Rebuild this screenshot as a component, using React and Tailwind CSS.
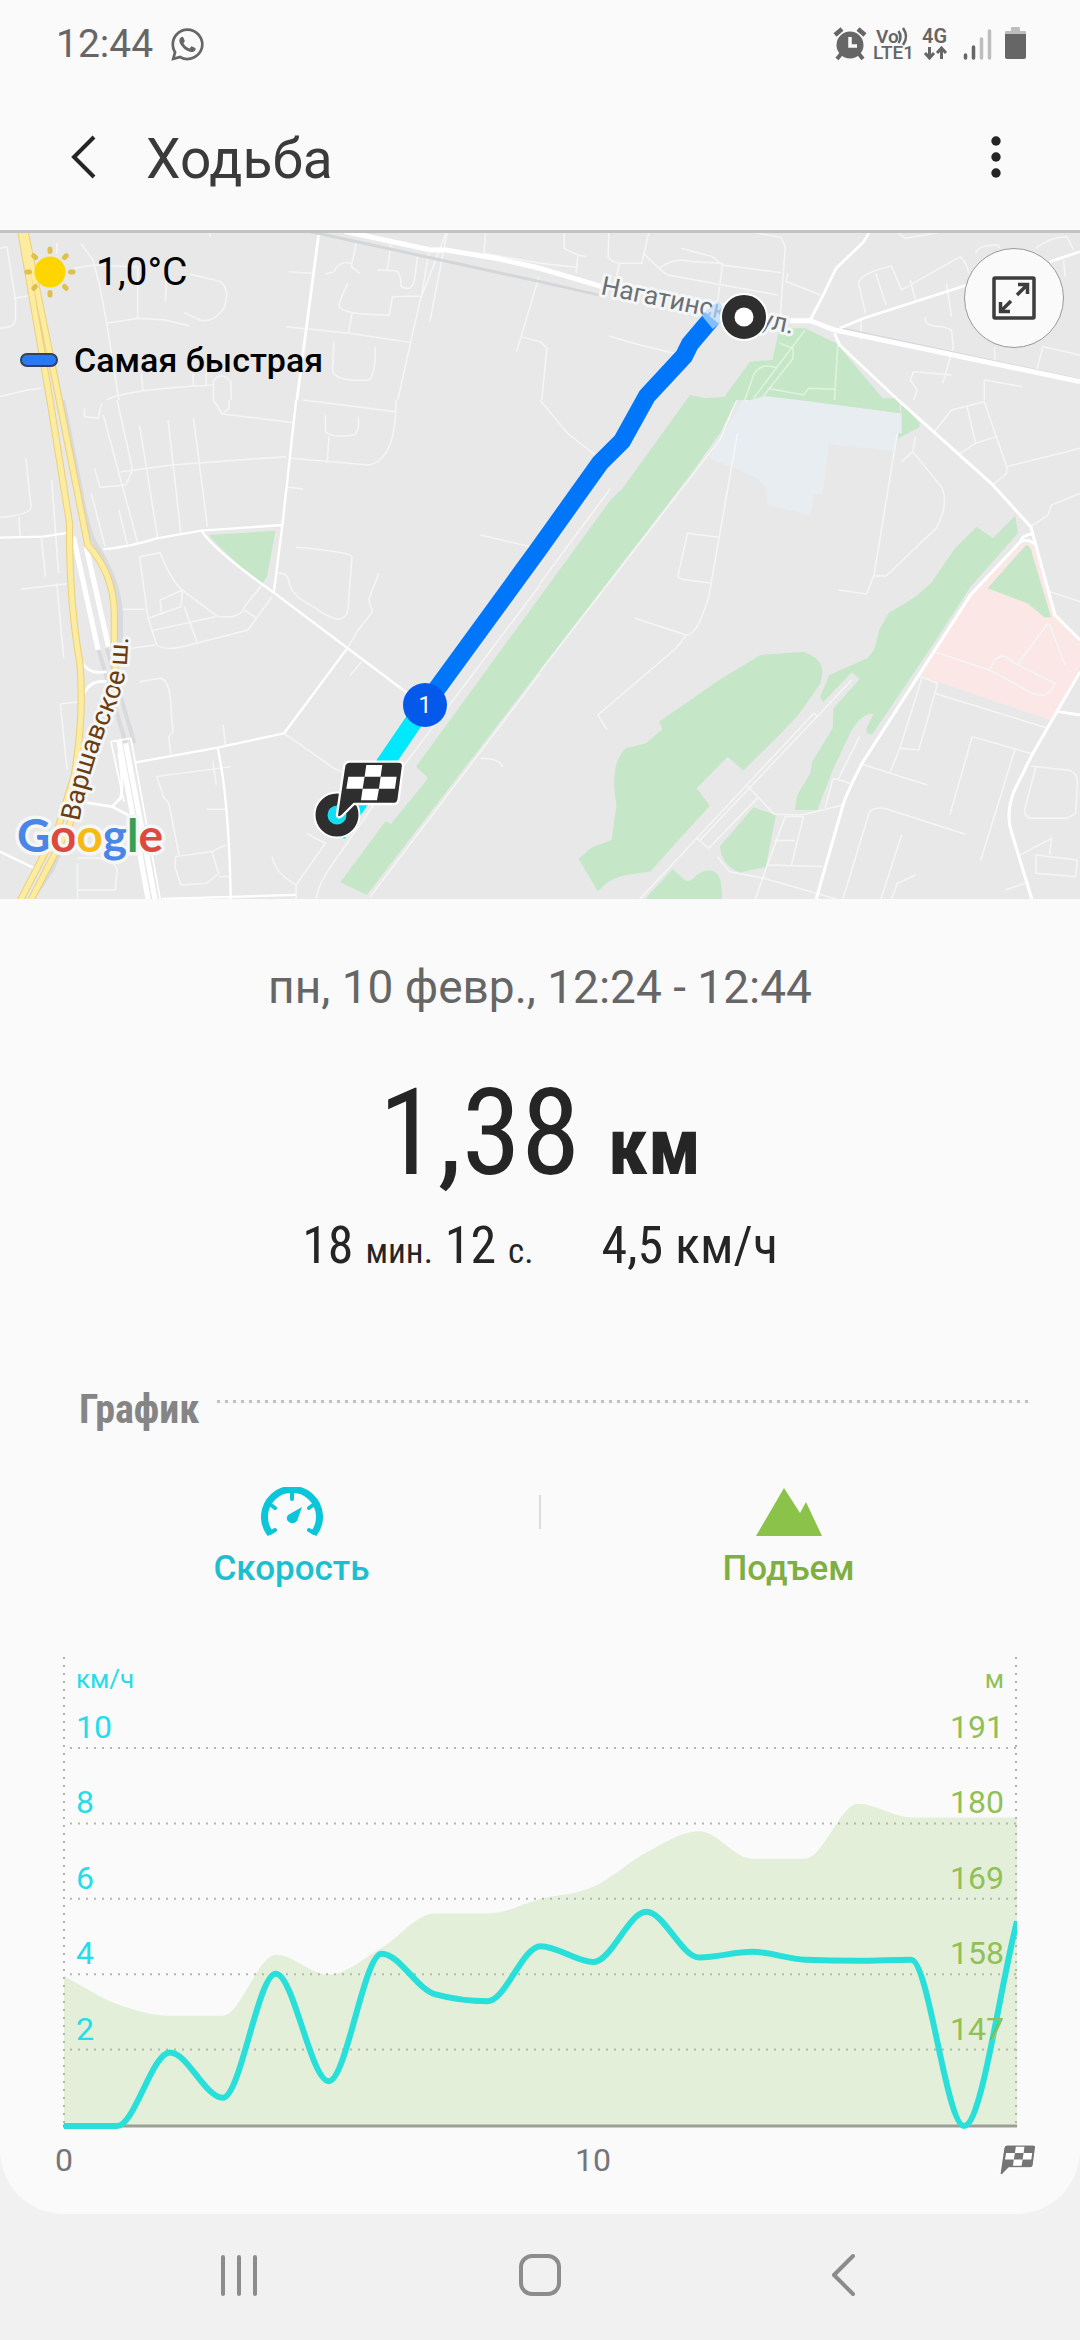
import { FaWhatsapp } from 'react-icons/fa'

const speed = [0, 0, 1.95, 0.75, 4.04, 1.19, 4.57, 3.5, 3.31, 4.77, 4.35, 5.68, 4.47, 4.62, 4.41, 4.38, 4.41, 0, 5.43]
const elevation = [157.9, 153.8, 152.1, 152.1, 161, 158.1, 162, 167, 167, 169.1, 170.9, 175.9, 179, 175, 175, 183, 181, 181, 181]

const CHART = { left: 64, right: 1017, top: 17, bottom: 486, step: 75.4 }

const rows = [
  { speed: 10, elevation: 191 },
  { speed: 8, elevation: 180 },
  { speed: 6, elevation: 169 },
  { speed: 4, elevation: 158 },
  { speed: 2, elevation: 147 }
]

// Monotone cubic curve through the points, so the line never overshoots a value
function smoothPath(values, toY) {
  const dx = (CHART.right - CHART.left) / (values.length - 1)
  const ys = values.map(toY)
  const slopes = ys.slice(1).map((y, i) => (y - ys[i]) / dx)
  const tangents = ys.map((_, i) => {
    if (i === 0) return slopes[0]
    if (i === ys.length - 1) return slopes[i - 1]
    const a = slopes[i - 1]
    const b = slopes[i]
    if (a * b <= 0) return 0
    return Math.sign(a) * Math.min(Math.abs(a), Math.abs(b), Math.abs(a + b) / 4) * 2
  })
  let d = `M${CHART.left} ${ys[0]}`
  for (let i = 1; i < ys.length; i++) {
    const x0 = CHART.left + dx * (i - 1)
    const x1 = x0 + dx
    d += `C${x0 + dx / 3} ${ys[i - 1] + (tangents[i - 1] * dx) / 3} ${x1 - dx / 3} ${ys[i] - (tangents[i] * dx) / 3} ${x1} ${ys[i]}`
  }
  return d
}

const speedPath = smoothPath(speed, v => CHART.bottom - (v / 2) * CHART.step)
const elevationPath = smoothPath(elevation, v => CHART.bottom - ((v - 136) / 11) * CHART.step)

function FlagShape({ fill }) {
  return (
    <>
      <path
        d="M50 5H195Q211 5 209 20L196 118Q194 132 180 132H62L26 168Q11 178 11 164L32 22Q34 5 50 5Z"
        fill={fill}
        stroke="#fff"
        strokeWidth="7"
        strokeLinejoin="round"
      />
      <path d="M99 15h48l-5 35h48l-5 36h-48l-6 35h-48l5-35h-49l6-36h49ZM94 50l-6 36h49l5-36Z" fill="#fff" fillRule="evenodd" />
    </>
  )
}

function StatusBar() {
  return (
    <div className="flex h-[88px] items-center justify-between pl-14 pr-[53px] text-[#666]">
      <div className="flex items-center gap-4">
        <span className="text-[39px] leading-[44px]">12:44</span>
        <FaWhatsapp className="size-[37px]" />
      </div>
      <svg className="h-9 w-[194px] overflow-visible" viewBox="0 0 194 36" fill="#666">
        {/* alarm */}
        <circle cx="17" cy="19" r="13.5" />
        <path d="M2 9l7-6M32 9l-7-6" stroke="#666" strokeWidth="4.5" />
        <path d="M8 28l-4 5M26 28l4 5" stroke="#666" strokeWidth="4" />
        <path d="M17 11v9h7" fill="none" stroke="#fafafa" strokeWidth="3.5" />
        {/* network */}
        <text x="43" y="17" fontSize="19" fontWeight="600">Vo</text>
        <path d="M65.500 5q4 6 0 12M70 2q6 8.500 0 17" fill="none" stroke="#666" strokeWidth="2.500" />
        <text x="40" y="33" fontSize="19" fontWeight="500">LTE1</text>
        <text x="89" y="17" fontSize="20" fontWeight="600">4G</text>
        <path d="M96.500 21v11m-4.500-5l4.500 5 4.500-5M108.500 33v-11m-4.500 5l4.500-5 4.500 5" fill="none" stroke="#666" strokeWidth="3" />
        {/* signal */}
        <path d="M132.500 32v-3M140.500 32v-11" stroke="#666" strokeWidth="3.500" strokeLinecap="round" />
        <path d="M148.500 32v-19M156.500 32v-27" stroke="#bdbdbd" strokeWidth="3.500" strokeLinecap="round" />
        {/* battery */}
        <path d="M172 8V6q0-1 1-1h5V2q0-1 1-1h7q1 0 1 1v3h5q1 0 1 1v2Z" fill="#bdbdbd" />
        <path d="M172 8h21v23q0 2-2 2h-17q-2 0-2-2Z" />
      </svg>
    </div>
  )
}

function Header() {
  return (
    <header className="flex h-[142px] items-center pb-1 pl-[62px] pr-[62px]">
      <button type="button" aria-label="Назад" className="flex size-11 items-center justify-center">
        <svg className="size-11" viewBox="0 0 44 44" fill="none" stroke="#252525" strokeWidth="4">
          <path d="M32 2L12 22l20 20" />
        </svg>
      </button>
      <h1 className="ml-10 grow pt-1 text-[55px] leading-[64px] text-[#3a3a3a]">Ходьба</h1>
      <button type="button" aria-label="Меню" className="flex size-11 items-center justify-center">
        <svg className="size-11" viewBox="0 0 44 44" fill="#252525">
          <circle cx="22" cy="6" r="4.700" />
          <circle cx="22" cy="22" r="4.700" />
          <circle cx="22" cy="38" r="4.700" />
        </svg>
      </button>
    </header>
  )
}

function MapDrawing() {
  return (
    <svg className="block h-auto w-full" viewBox="0 0 1080 669">
      <defs>
        <path id="warsaw" d="M79 592C87 552 97 520 111 487S128 440 128 404V380" />
      </defs>
      <rect width="1080" height="669" fill="#e8e8e8" />

      {/* parks and blocks, south east */}
      <g transform="matrix(.3444 0 0 .3333 540 170)">
        <path d="M490 175L590 0H770L1050 40 1025 152 838 132 820 280 795 285 785 345 660 315 658 265 635 238 590 215Z" fill="#e8edf1" />
        <path d="M610-5H1045V40L770 0 640 12Z" fill="#c5e7c8" />
        <path d="M1050 10L1105 72 1040 116Z" fill="#c5e7c8" />
        <path d="M425 0L240 265 205 300 0 590V810L440 220 525 95 570 0 500 10Z" fill="#c5e7c8" />
        <path d="M1268 380L1315 415 1380 347 1388 400 1250 560 1150 720 965 1003Q945 1005 948 985L968 943Q940 935 905 990L850 1110 805 1230H740L747 1185 785 1120 790 1085 850 985 852 925 928 838 905 817 822 907 813 890 840 825 950 775 970 750 985 690 1012 640 1090 590 1135 550 1205 445Z" fill="#c5e7c8" />
        <path d="M640 765L765 755Q822 775 820 820L815 850 750 945 690 1010 590 1112 545 1070 455 1165 493 1217 320 1415 250 1425Q200 1435 168 1474L112 1377 150 1343 208 1320 222 1215Q200 1090 250 1045L308 1030 355 988 346 965 520 840Z" fill="#c5e7c8" />
        <path d="M620 1222L685 1245 655 1402 580 1418Q525 1395 523 1338Z" fill="#c5e7c8" />
        <path d="M303 1500L385 1407 420 1440Q435 1450 455 1425 490 1400 515 1422 530 1440 528 1500Z" fill="#c5e7c8" />
        <path d="M1400 430L1435 430 1500 640 1568 720V800L1485 962 1105 828 1250 590Z" fill="#fbe7e6" />
        <path d="M1412 434Q1428 440 1430 465L1484 652H1465L1415 610 1300 565Z" fill="#c5e7c8" />
        <g fill="none" stroke="#f4f6f6" strokeWidth="4.500">
          <path d="M0 815L525 115 570 0M600 0L575 90 490 590Q455 710 425 705L275 655M520 412L428 400 400 530 412 538 498 550M425 705L395 745 168 945 195 990M1045 50L970 525 948 582 865 570M970 528H1005L1150 385Q1190 310 1165 260L1082 155 1090 110M1082 155L1050 185M0 550L205 265M0 0L80 100 160 165" />
          <path d="M1145 95L1195 30 1290 5 1355 200 1530 155 1568 145M1355 200V220L1315 255M1240 20L1265 130 1325 110M1212 165L1265 130M1425 380L1475 345 1485 315 1568 280" />
          <path d="M290 1497L600 1155 795 940 805 950M455 1315L490 1345 635 1190M465 1320L905 840M600 1155L680 1243 760 1245 880 1215M515 1370L550 1415 650 1435 860 1497M625 1497L660 1395 712 1250H765L730 1395M680 1322H740M660 1395L820 1400" />
          <path d="M1105 830L1155 850M1110 830L1045 1045 1015 1120M1155 850L1100 1050 1045 1045M935 1093L1125 1155M850 1137H860L900 1150M850 1137L828 1225M928 1010L865 1140M1145 880L1475 985M1255 1010L1190 1245M1255 1010L1430 1062M1380 1045L1280 1380M880 1497L955 1240Q965 1220 1000 1225L1235 1303M1050 1305L990 1497M1020 1497L1038 1450 1090 1425M1425 1098L1530 1110Q1565 1115 1560 1160L1555 1240 1530 1255H1425Q1405 1250 1408 1225L1440 1100M1385 1370L1485 1315 1480 1365M1440 1365L1560 1380 1555 1430 1440 1420ZM1350 1470L1410 1450" />
          <path d="M1475 670L1385 795M1478 670L1525 795M1145 755L1305 810 1320 780Q1345 755 1370 785L1495 850Q1480 900 1430 880L1305 810M1480 575L1568 605" />
        </g>
        <g fill="none" stroke="#fff" strokeWidth="9">
          <path d="M1040 0L1310 250 1425 380 1495 645 1568 720M1395 425Q1400 405 1430 402M1395 425Q1420 415 1437 432M1395 425L1250 585 935 1090Q890 1180 880 1215L802 1497M1568 815L1430 1062 1378 1170Q1350 1240 1370 1300L1428 1497M1505 935L1568 945" />
        </g>
      </g>

      {/* north east */}
      <g transform="matrix(.3444 0 0 .3333 540 -230)">
        <path d="M695 985L770 985 860 1030 1000 1200 1105 1280 1040 1316 1050 1240 660 1200 570 1200 520 1300 425 1200 435 1185 480 1195 535 1190 610 1085 675 1080Z" fill="#c5e7c8" />
        <path d="M595 1205L650 1188 750 1200 1050 1240V1300H560Z" fill="#e8edf1" />
        <path d="M770 1200H1010L1045 1240Z" fill="#c5e7c8" />
        <g fill="none" stroke="#f4f6f6" strokeWidth="4.500">
          <path d="M70 690V745L110 765 105 820M0 790L105 802M200 690L198 770Q210 790 235 790H295L318 690M110 765L135 770M230 790L222 830M300 760L345 805Q390 770 440 785L530 790 515 910M410 745L500 770 530 795 700 818M345 805L370 825 690 885M580 690L700 712 712 740 695 985M720 820L715 845 815 885M925 850Q930 820 1020 798L1050 870 1220 770Q1240 790 1245 820M975 820L1005 915M1075 840L1090 900M1030 690L1060 715 1200 690" />
          <path d="M925 850L945 940M932 960V1020M1120 950Q1110 980 1170 980L1195 990 1200 1040 1170 1150M1180 850L1195 950M1085 1115L1195 1125M1085 1115L1075 1140 1095 1170 1085 1200M1290 1140L1400 1160M1290 1140V1200M1320 1040V1090M1440 1120L1460 1040 1568 1065M1265 760Q1270 735 1330 735L1335 745M1440 745Q1480 710 1530 710L1550 750M1520 780L1525 830M200 1008L290 1035 410 1065M0 1025L20 1045 5 1200" />
          <path d="M695 1030L735 1045V1075L640 1200M690 1105Q640 1085 620 1125L595 1200M865 1030L855 1200M660 1165L765 1185 780 1165 855 1168M770 990L620 1195" stroke="#dff3df" />
        </g>
        <path d="M0 845L170 885M870 985L1568 1140" fill="none" stroke="#d4d7da" strokeWidth="8" />
        <g fill="none" stroke="#fff" strokeWidth="8">
          <path d="M960 690L940 725 860 805 820 890 785 960M870 985L940 955 1240 855M1480 785L1568 755M855 1000L870 1035 1045 1205" />
          <path d="M0 805L180 860M725 962H785L855 990 1568 1145" strokeWidth="15" />
        </g>
      </g>

      {/* north west */}
      <g transform="matrix(.3444 0 0 .3333 0 -230)">
        <g fill="none" stroke="#f4f6f6" strokeWidth="4.500">
          <path d="M235 730L270 780 290 860 310 970 345 1200M215 805L275 795 400 800M400 800V955L310 970M400 955L480 960 550 978M485 800L480 905M550 822L640 845Q670 870 650 925 620 970 580 960L535 938M0 745L20 740 45 900V960Q40 985 0 985M40 895L100 885M165 730V760" />
          <path d="M1035 725L1020 800 1045 820M1020 790Q985 780 970 815L945 822M1095 810L1150 812Q1165 820 1165 860 1200 880 1205 830L1212 770M1010 850Q975 920 990 925 1010 945 1130 945L1140 890 1225 888M1022 940L1012 1000M830 980L1015 1000 1195 1028M1295 700L1220 900 1155 1200M1245 760L1225 880M1300 690L1248 965M838 815L905 820M1565 830L1500 1055M1510 1010L1568 1025M970 1025L965 1110Q970 1145 1060 1140 1090 1150 1090 1040M610 690V710M1410 700L1405 760 1568 790M1135 730L1125 810" />
          <path d="M0 1190L80 1170 120 1165M310 1200Q350 1170 620 1155M410 1120L415 1170M560 1120L562 1160M600 1100L598 1155M620 1200V1145Q640 1110 670 1145L672 1200" />
        </g>
        <path d="M925 705L862 1200" stroke="#fff" strokeWidth="8" fill="none" />
        <path d="M880 690L1568 845" stroke="#d4d7da" strokeWidth="9" fill="none" />
        <path d="M1000 694L1250 750H1295L1440 775 1568 805" stroke="#fff" strokeWidth="15" fill="none" />
      </g>

      {/* south west */}
      <g transform="matrix(.3444 0 0 .3333 0 170)">
        <path d="M605 405L800 392 775 530 762 550Q680 490 605 405Z" fill="#c5e7c8" />
        <path d="M1568 590L1208 1100 1243 1135 1135 1272 1120 1263 988 1447 1065 1485 1568 810Z" fill="#c5e7c8" />
        <g fill="none" stroke="#f4f6f6" strokeWidth="4.500">
          <path d="M340 0L385 210 365 255 290 262 275 205M350 215L500 195 830 170M405 75L458 415M488 60L525 400M562 55L602 380M300 45L400 430M245 25V50L285 55 295 10M75 175L90 320Q90 345 0 352M55 350L58 410M120 415L132 530M60 568L205 550M150 240L170 520M165 550L185 775M265 280L305 440M345 330L370 435" />
          <path d="M845 175L1070 195Q1150 180 1150 0M945 45V95Q960 115 1030 105 1045 90 1040 50M955 110L950 190M835 262L880 266M880 0L1150 35M620 0L645 42 855 68M665 0V25L645 42M405 470L465 458Q500 550 535 575L630 648Q700 660 710 620L760 555M405 470L430 655 455 735Q480 755 550 735L720 690 790 590M430 655L525 620 530 570 465 600 470 645M440 692L625 650M535 620L572 727M350 628H420M380 745L450 735M710 630L745 655M805 520Q835 515 840 550 850 590 910 620 1000 690 1010 630L1022 470Q1010 455 860 442M1100 520L1070 600 1082 635 1040 690 1008 745M1050 785L1015 828" />
          <path d="M405 845L465 835Q490 840 495 900L502 995 490 1010 497 1070M455 1130L475 1190 490 1210 520 1365M455 1130L670 1100M618 1085L628 1155M600 1228H655M510 1370L615 1355 635 1420 600 1450 525 1455 508 1400ZM615 1355L655 1335M635 1430H665M225 1390V1500M225 1375Q330 1365 340 1410L335 1470H225M175 912L195 1110M175 912L230 905M825 1000L970 1105 1000 1120M1395 405L1560 445M790 1370Q800 1420 860 1455L945 1330 890 1300M860 1455V1497M1085 1215L960 1400Q925 1450 918 1497M1568 555L1130 1155M1568 820L1075 1490M1395 1075Q1450 1075 1460 1100M648 975L655 1040" />
        </g>
        <g fill="none" stroke="#fff" strokeWidth="7">
          <path d="M860 0L820 375 795 578M300 448Q380 440 455 415L585 392 820 375M585 392Q620 450 795 578L1190 885M1008 745L825 1000 632 1043 395 1087M632 1043Q665 1200 670 1497M470 1497L860 1485M0 413L125 410 200 398M0 1355L110 1410" />
        </g>
        {/* highway */}
        <path d="M182 0L230 250Q250 380 275 430 345 540 350 640V760M65 1540L150 1410 205 1280" fill="none" stroke="#d8dade" strokeWidth="14" />
        <path d="M285 745L365 1030M310 745L390 1030" fill="none" stroke="#d9dadd" strokeWidth="12" />
        <path d="M240 790Q260 825 310 815M245 880Q260 840 310 845M345 1060Q360 1150 350 1195L325 1220 250 1208M325 1220L390 1255" fill="none" stroke="#fff" strokeWidth="8" />
        <g fill="none" stroke="#fff" strokeWidth="15">
          <path d="M213 410L285 750M250 440L315 740M345 1020L430 1497M365 1030L450 1497" />
          <path d="M322 1025L360 1205M380 1015L465 1497M322 1025L380 1015" strokeWidth="5" />
        </g>
        {[['#eccf7c', 21], ['#fcec9f', 15]].map(([color, width]) => (
          <path
            key={color}
            d="M60-510L145 0 202 370Q200 600 232 790 245 950 215 1130L170 1280 60 1500M72-510L172 0 255 435Q330 520 332 640V760Q345 870 290 1020L200 1280 90 1500"
            fill="none"
            stroke={color}
            strokeWidth={width}
          />
        ))}
      </g>

      {/* labels */}
      <g stroke="#f5f6f6" strokeWidth="6" strokeLinejoin="round" className="[paint-order:stroke]">
        <text x="600" y="64" fontSize="26" transform="rotate(11.700 600 64)" fill="#6b7076">Нагатинская ул.</text>
        <text fontSize="27" fill="#6b3d10">
          <textPath href="#warsaw">Варшавское ш.</textPath>
        </text>
      </g>
      <text x="17" y="622" fontSize="46" className="font-[Lato,sans-serif] [paint-order:stroke]" stroke="#f5f6f6" strokeWidth="7" strokeLinejoin="round" fontWeight="700">
        <tspan fill="#4a86e8">G</tspan>
        <tspan fill="#dc4a3d">o</tspan>
        <tspan fill="#f5bb13">o</tspan>
        <tspan fill="#4a86e8">g</tspan>
        <tspan fill="#34a053">l</tspan>
        <tspan fill="#dc4a3d">e</tspan>
      </text>

      {/* route */}
      <g fill="none" strokeWidth="18">
        <path d="M425 475L337 604" stroke="#00e8fb" />
        <path d="M712 88L690 114 684 126 647 166 622 211 600 233 538 320 425 475" stroke="#0077fb" />
        <path d="M707 92L724 78" stroke="#b9dcff" opacity=".7" />
      </g>
      <circle cx="744" cy="87" r="23" fill="#2e2e2e" stroke="#fff" strokeWidth="2" />
      <circle cx="744" cy="87" r="9.500" fill="#fff" />
      <circle cx="425" cy="475" r="22" fill="#0559ea" />
      <text x="425" y="483" fontSize="23" fill="#fff" textAnchor="middle">1</text>
      <circle cx="337" cy="585" r="22.500" fill="#2e2e2e" stroke="#fff" strokeWidth="2" />
      <circle cx="337" cy="585" r="9.500" fill="#11ddf3" />
      <g transform="translate(333.300 530) scale(.3333)">
        <FlagShape fill="#2e2e2e" />
      </g>
    </svg>
  )
}

function RouteMap() {
  return (
    <section className="relative" aria-label="Карта">
      <MapDrawing />
      <div className="absolute inset-x-0 top-0 h-[3px] bg-[#c3c3c3]" />
      <div className="absolute left-5 top-3 text-black">
        <div className="flex items-center">
          <svg className="size-[60px] shrink-0" viewBox="-30 -30 60 60" stroke="#dfc04c" strokeWidth="5" strokeLinecap="round">
            {[0, 45, 90, 135, 180, 225, 270, 315].map(angle => (
              <path key={angle} d="M0-23V-20.500" transform={`rotate(${angle})`} />
            ))}
            <circle r="15.500" fill="#ffd500" stroke="none" />
          </svg>
          <span className="ml-4 text-[39px] leading-[50px]">1,0°C</span>
        </div>
        <div className="mt-9 flex items-center gap-4">
          <span className="h-[14px] w-[38px] rounded-full border-2 border-[#32415c] bg-[#2979f5]" />
          <span className="text-[34px] font-medium leading-[44px]">Самая быстрая</span>
        </div>
      </div>
      <button
        type="button"
        aria-label="Развернуть карту"
        className="absolute right-4 top-[18px] flex size-[100px] items-center justify-center rounded-full border border-[#999] bg-[#fafafa]"
      >
        <svg className="size-11" viewBox="0 0 44 44" fill="none" stroke="#3d3d3d" strokeWidth="3.500">
          <rect x="2" y="2" width="40" height="40" rx="1" />
          <path d="M25 19L35 9M26 8.500h9.500V18M19 25L9 35M18 35.500H8.500V26" />
        </svg>
      </button>
    </section>
  )
}

function Summary() {
  return (
    <section className="mt-[58px] text-center text-[#252525]">
      <p className="text-[46px] leading-[60px] text-[#666]">пн, 10 февр., 12:24 - 12:44</p>
      <p className="mt-[46px] font-['Roboto_Condensed',Roboto,sans-serif] text-[120px] leading-[140px]">
        1,38 <span className="text-[80px] font-bold leading-none">км</span>
      </p>
      <div className="mt-[11px] flex items-baseline justify-center gap-[68px] font-['Roboto_Condensed',Roboto,sans-serif] text-[52px] leading-[64px]">
        <p>
          18 <span className="text-[35px] leading-none">мин.</span> 12 <span className="text-[35px] leading-none">с.</span>
        </p>
        <p>4,5 км/ч</p>
      </div>
    </section>
  )
}

function SeriesTabs() {
  return (
    <div className="mt-[53px] grid grid-cols-[1fr_auto_1fr] text-[35px] font-medium leading-[44px]">
      <button type="button" className="flex flex-col items-center gap-[11px] pl-11 text-[#1cbfd0]">
        <svg className="h-[49px] w-[62px]" viewBox="0 0 62 49" fill="none" stroke="#0bc6d9">
          <path d="M9.500 47A27.500 27.500 0 1 1 52.500 47" strokeWidth="7" />
          <path d="M31 6v6M10 18l4 3M52 18l-4 3M9 46l5-3M53 46l-5-3" strokeWidth="4" strokeLinecap="round" />
          <path d="M41 20L36 34Q32 38 28 35T27 28Z" fill="#0bc6d9" stroke="none" />
        </svg>
        Скорость
      </button>
      <span className="mt-2 h-[34px] w-[2px] bg-[#dcdcdc]" />
      <button type="button" className="flex flex-col items-center gap-[11px] pr-11 text-[#7fae42]">
        <svg className="h-[49px] w-[66px]" viewBox="0 0 66 49" fill="#8bc34a">
          <path d="M0 49L28 1 44 26 50 15 66 49Z" />
        </svg>
        Подъем
      </button>
    </div>
  )
}

function Chart() {
  return (
    <svg className="mt-[49px] block h-auto w-full" viewBox="0 0 1080 574" role="img" aria-label="График">
      <clipPath id="plot">
        <rect x="63" y="0" width="954" height="490" />
      </clipPath>
      <path d={`${elevationPath}V486H64Z`} fill="#e3efd8" />
      <g stroke="#b3b8ae" strokeWidth="2" strokeDasharray="2 6">
        {rows.map((row, i) => (
          <path key={row.speed} d={`M70 ${108 + i * 75.4}H1017`} />
        ))}
        <path d="M64 17V486M1016 17V486" />
      </g>
      <path d="M63 486H1017" stroke="#9c9f98" strokeWidth="3" />
      <path d={speedPath} fill="none" stroke="#29dfd9" strokeWidth="6" strokeLinejoin="round" clipPath="url(#plot)" />
      <g fill="#25dcea">
        <text x="76" y="48" fontSize="26">км/ч</text>
        {rows.map((row, i) => (
          <text key={row.speed} x="76" y={98 + i * 75.4} fontSize="32">{row.speed}</text>
        ))}
      </g>
      <g fill="#90c056" textAnchor="end">
        <text x="1004" y="48" fontSize="26">м</text>
        {rows.map((row, i) => (
          <text key={row.elevation} x="1004" y={98 + i * 75.4} fontSize="32">{row.elevation}</text>
        ))}
      </g>
      <g fill="#757575" fontSize="32" textAnchor="middle">
        <text x="64" y="531">0</text>
        <text x="593" y="531">10</text>
      </g>
      <g transform="translate(998 504) scale(.18)">
        <FlagShape fill="#757575" />
      </g>
    </svg>
  )
}

function NavBar() {
  return (
    <nav className="grid h-[126px] grid-cols-[1fr_auto_1fr] items-center pb-1">
      <button type="button" aria-label="Недавние" className="ml-[218px] justify-self-start">
        <svg className="size-11" viewBox="0 0 44 44" stroke="#8c8c8c" strokeWidth="4" strokeLinecap="round">
          <path d="M5 4v37M21 4v37M37 4v37" />
        </svg>
      </button>
      <button type="button" aria-label="Домой">
        <svg className="size-11" viewBox="0 0 44 44" fill="none" stroke="#8c8c8c" strokeWidth="4">
          <rect x="3" y="3" width="38" height="38" rx="11" />
        </svg>
      </button>
      <button type="button" aria-label="Назад" className="mr-[214px] justify-self-end">
        <svg className="size-11" viewBox="0 0 44 44" fill="none" stroke="#8c8c8c" strokeWidth="4" strokeLinecap="round" strokeLinejoin="round">
          <path d="M31 3L12 22l19 19" />
        </svg>
      </button>
    </nav>
  )
}

export default function App() {
  return (
    <div className="min-h-screen bg-[#f1f1f1] font-[Roboto,sans-serif]">
      <main className="rounded-b-[64px] bg-[#fafafa]">
        <StatusBar />
        <Header />
        <RouteMap />
        <Summary />
        <div className="mt-[108px] flex pl-[79px] pr-12">
          <h2 className="font-['Roboto_Condensed',Roboto,sans-serif] text-[40px] font-bold leading-[48px] text-[#858585]">График</h2>
          <svg className="ml-[18px] mt-[14px] h-[3px] grow" stroke="#c0c0c0" strokeWidth="3" strokeDasharray="3 5">
            <line x1="0" y1="1.500" x2="100%" y2="1.500" />
          </svg>
        </div>
        <SeriesTabs />
        <Chart />
      </main>
      <NavBar />
    </div>
  )
}
